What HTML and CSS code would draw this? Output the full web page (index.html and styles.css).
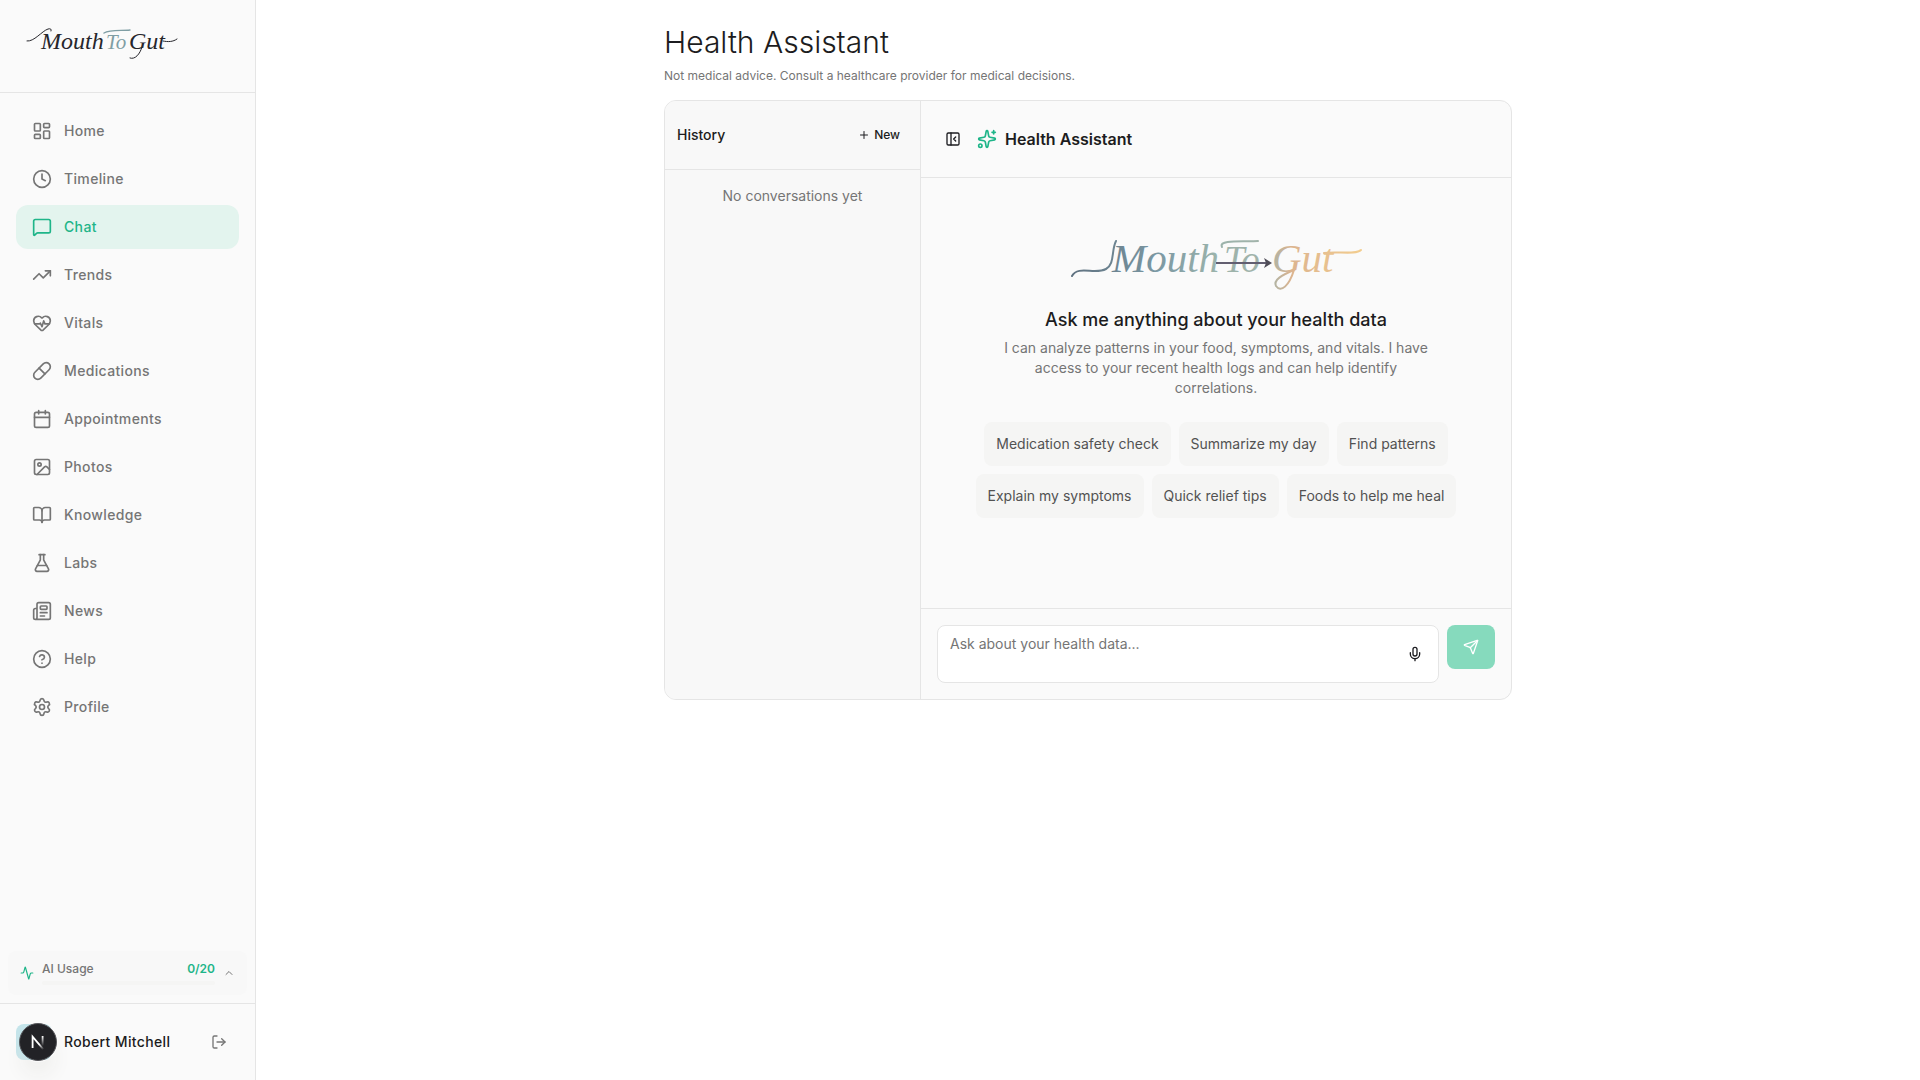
FILE: index.html
```html
<!DOCTYPE html>
<html lang="en">
<head>
<meta charset="utf-8">
<meta name="viewport" content="width=device-width, initial-scale=1">
<title>Health Assistant – Mouth To Gut</title>
<link rel="stylesheet" href="styles.css">
</head>
<body>
<div class="app">
  <aside class="sidebar">
    <header class="brand">
      <a href="#" aria-label="Mouth To Gut">
        <svg class="brand-logo" viewBox="0 0 160 44">
          <g fill="none" stroke="#26262c" stroke-linecap="round">
            <path stroke-width="1" d="M3 19C10 20 18 9 24 7Q28 6 27 9"/>
            <path stroke-width="1" d="M139 19C144 20 149 20 153 17"/>
            <path stroke-width="1" d="M118 25C116 32 111 38 106 36"/>
          </g>
          <path fill="none" stroke="#7f9ea4" stroke-width="1.4" stroke-linecap="round" d="M80 11C86 7 98 9 106 8"/>
          <text class="script" x="17" y="27" font-size="24" fill="#26262c">Mouth</text>
          <text class="script" x="82" y="27" font-size="21" fill="#7f9ea4">To</text>
          <text class="script" x="105" y="27" font-size="24" fill="#26262c">Gut</text>
        </svg>
      </a>
    </header>

    <nav class="nav" aria-label="Main">
      <a class="nav-item" href="#"><svg class="icon" viewBox="0 0 24 24"><rect width="7" height="9" x="3" y="3" rx="1"/><rect width="7" height="5" x="14" y="3" rx="1"/><rect width="7" height="9" x="14" y="12" rx="1"/><rect width="7" height="5" x="3" y="16" rx="1"/></svg>Home</a>
      <a class="nav-item" href="#"><svg class="icon" viewBox="0 0 24 24"><circle cx="12" cy="12" r="10"/><path d="M12 6v6l4 2"/></svg>Timeline</a>
      <a class="nav-item active" href="#" aria-current="page"><svg class="icon" viewBox="0 0 24 24"><path d="M22 17a2 2 0 0 1-2 2H6.828a2 2 0 0 0-1.414.586l-2.202 2.202A.71.71 0 0 1 2 21.286V5a2 2 0 0 1 2-2h16a2 2 0 0 1 2 2z"/></svg>Chat</a>
      <a class="nav-item" href="#"><svg class="icon" viewBox="0 0 24 24"><path d="M16 7h6v6"/><path d="m22 7-8.5 8.5-5-5L2 17"/></svg>Trends</a>
      <a class="nav-item" href="#"><svg class="icon" viewBox="0 0 24 24"><path d="M2 9.5a5.5 5.5 0 0 1 9.591-3.676.56.56 0 0 0 .818 0A5.49 5.49 0 0 1 22 9.5c0 2.29-1.5 4-3 5.5l-5.492 5.313a2 2 0 0 1-3 .019L5 15c-1.5-1.5-3-3.2-3-5.5"/><path d="M3.22 13H9.5l.5-1 2 4.5 2-7 1.5 3.5h5.27"/></svg>Vitals</a>
      <a class="nav-item" href="#"><svg class="icon" viewBox="0 0 24 24"><path d="m10.5 20.5 10-10a4.95 4.95 0 1 0-7-7l-10 10a4.95 4.95 0 1 0 7 7Z"/><path d="m8.5 8.5 7 7"/></svg>Medications</a>
      <a class="nav-item" href="#"><svg class="icon" viewBox="0 0 24 24"><path d="M8 2v4"/><path d="M16 2v4"/><rect width="18" height="18" x="3" y="4" rx="2"/><path d="M3 10h18"/></svg>Appointments</a>
      <a class="nav-item" href="#"><svg class="icon" viewBox="0 0 24 24"><rect width="18" height="18" x="3" y="3" rx="2"/><circle cx="9" cy="9" r="2"/><path d="m21 15-3.086-3.086a2 2 0 0 0-2.828 0L6 21"/></svg>Photos</a>
      <a class="nav-item" href="#"><svg class="icon" viewBox="0 0 24 24"><path d="M12 7v14"/><path d="M3 18a1 1 0 0 1-1-1V4a1 1 0 0 1 1-1h5a4 4 0 0 1 4 4 4 4 0 0 1 4-4h5a1 1 0 0 1 1 1v13a1 1 0 0 1-1 1h-6a3 3 0 0 0-3 3 3 3 0 0 0-3-3z"/></svg>Knowledge</a>
      <a class="nav-item" href="#"><svg class="icon" viewBox="0 0 24 24"><path d="M14 2v6a2 2 0 0 0 .245.96l5.51 10.08A2 2 0 0 1 18 22H6a2 2 0 0 1-1.755-2.96l5.51-10.08A2 2 0 0 0 10 8V2"/><path d="M6.453 15h11.094"/><path d="M8.5 2h7"/></svg>Labs</a>
      <a class="nav-item" href="#"><svg class="icon" viewBox="0 0 24 24"><path d="M15 18h-5"/><path d="M18 14h-8"/><path d="M4 22h16a2 2 0 0 0 2-2V4a2 2 0 0 0-2-2H8a2 2 0 0 0-2 2v16a2 2 0 0 1-4 0v-9a2 2 0 0 1 2-2h2"/><rect width="8" height="4" x="10" y="6" rx="1"/></svg>News</a>
      <a class="nav-item" href="#"><svg class="icon" viewBox="0 0 24 24"><circle cx="12" cy="12" r="10"/><path d="M9.09 9a3 3 0 0 1 5.83 1c0 2-3 3-3 3"/><path d="M12 17h.01"/></svg>Help</a>
      <a class="nav-item" href="#"><svg class="icon" viewBox="0 0 24 24"><path d="M9.671 4.136a2.34 2.34 0 0 1 4.659 0 2.34 2.34 0 0 0 3.319 1.915 2.34 2.34 0 0 1 2.33 4.033 2.34 2.34 0 0 0 0 3.831 2.34 2.34 0 0 1-2.33 4.033 2.34 2.34 0 0 0-3.319 1.915 2.34 2.34 0 0 1-4.659 0 2.34 2.34 0 0 0-3.32-1.915 2.34 2.34 0 0 1-2.33-4.033 2.34 2.34 0 0 0 0-3.831A2.34 2.34 0 0 1 6.35 6.051a2.34 2.34 0 0 0 3.319-1.915"/><circle cx="12" cy="12" r="3"/></svg>Profile</a>
    </nav>

    <button class="usage" type="button" aria-expanded="false">
      <svg class="icon usage-icon" viewBox="0 0 24 24"><path d="M22 12h-2.48a2 2 0 0 0-1.93 1.46l-2.35 8.36a.25.25 0 0 1-.48 0L9.24 2.18a.25.25 0 0 0-.48 0l-2.35 8.36A2 2 0 0 1 4.49 12H2"/></svg>
      <span class="usage-body">
        <span class="usage-row"><span>AI Usage</span><strong class="usage-count">0/20</strong></span>
        <span class="usage-track"></span>
      </span>
      <svg class="icon usage-chevron" viewBox="0 0 24 24"><path d="m18 15-6-6-6 6"/></svg>
    </button>

    <footer class="user">
      <span class="avatar">
        <button class="dev-badge" type="button" aria-label="Open dev tools">
          <svg viewBox="0 0 40 40">
            <defs>
              <linearGradient id="nDiag" x1="16" y1="14" x2="26" y2="27" gradientUnits="userSpaceOnUse"><stop offset=".6" stop-color="#fff"/><stop offset="1" stop-color="#fff" stop-opacity="0"/></linearGradient>
              <linearGradient id="nStem" x1="0" y1="14" x2="0" y2="24" gradientUnits="userSpaceOnUse"><stop offset="0" stop-color="#fff"/><stop offset="1" stop-color="#fff" stop-opacity="0"/></linearGradient>
            </defs>
            <circle cx="20" cy="20" r="18.5" fill="#222226" stroke="#57575b"/>
            <path fill="none" stroke="url(#nDiag)" stroke-width="1.8" d="M14.6 26V14.6L25.4 27.4"/>
            <path fill="none" stroke="url(#nStem)" stroke-width="1.8" d="M24.6 14v10"/>
          </svg>
        </button>
      </span>
      <span class="user-name">Robert Mitchell</span>
      <button class="logout" type="button" aria-label="Sign out"><svg class="icon small" viewBox="0 0 24 24"><path d="m16 17 5-5-5-5"/><path d="M21 12H9"/><path d="M9 21H5a2 2 0 0 1-2-2V5a2 2 0 0 1 2-2h4"/></svg></button>
    </footer>
  </aside>

  <main class="main">
    <div class="page">
      <h1 class="page-title">Health Assistant</h1>
      <p class="page-note">Not medical advice. Consult a healthcare provider for medical decisions.</p>

      <div class="card">
        <section class="history">
          <header class="history-head">
            <h2 class="history-title">History</h2>
            <button class="new-btn" type="button"><svg class="icon tiny" viewBox="0 0 24 24"><path d="M5 12h14"/><path d="M12 5v14"/></svg>New</button>
          </header>
          <p class="history-empty">No conversations yet</p>
        </section>

        <section class="chat">
          <header class="chat-head">
            <button class="panel-btn" type="button" aria-label="Collapse history"><svg class="icon small" viewBox="0 0 24 24"><rect width="18" height="18" x="3" y="3" rx="2"/><path d="M9 3v18"/><path d="m16 15-3-3 3-3"/></svg></button>
            <svg class="icon accent" viewBox="0 0 24 24"><path d="M11.017 2.814a1 1 0 0 1 1.966 0l1.051 5.558a2 2 0 0 0 1.594 1.594l5.558 1.051a1 1 0 0 1 0 1.966l-5.558 1.051a2 2 0 0 0-1.594 1.594l-1.051 5.558a1 1 0 0 1-1.966 0l-1.051-5.558a2 2 0 0 0-1.594-1.594l-5.558-1.051a1 1 0 0 1 0-1.966l5.558-1.051a2 2 0 0 0 1.594-1.594z"/><path d="M20 2v4"/><path d="M22 4h-4"/><circle cx="4" cy="20" r="2"/></svg>
            <h2 class="chat-title">Health Assistant</h2>
          </header>

          <div class="intro">
            <svg class="intro-logo" viewBox="0 0 320 64" role="img" aria-label="Mouth To Gut">
              <defs>
                <linearGradient id="ink" x1="15" y1="0" x2="305" y2="0" gradientUnits="userSpaceOnUse">
                  <stop offset="0" stop-color="#5f7180"/><stop offset=".3" stop-color="#7b98a3"/><stop offset=".5" stop-color="#9bb3ab"/><stop offset=".68" stop-color="#a3b3aa"/><stop offset=".76" stop-color="#dcb48f"/><stop offset="1" stop-color="#f3cd8f"/>
                </linearGradient>
              </defs>
              <g fill="none" stroke="url(#ink)" stroke-width="2" stroke-linecap="round">
                <path d="M16 50C22 39 39 49 50 43C59 38 55 25 60 15"/>
                <path d="M166 21C162 13 188 16 202 15"/>
                <path d="M268 27C280 25 300 29 305 24"/>
                <path d="M238 44C233 60 225 67 220 60C217 54 226 49 238 44"/>
              </g>
              <text class="script" x="56" y="46" font-size="41" fill="url(#ink)">Mouth</text>
              <text class="script" x="168" y="46" font-size="37" fill="url(#ink)">To</text>
              <text class="script" x="216" y="46" font-size="41" fill="url(#ink)">Gut</text>
              <path fill="none" stroke="#625e70" stroke-width="2" d="M160 37H213"/>
              <path fill="#4f4c57" d="m208 32 8 5-8 5 2-5z"/>
            </svg>
            <h3 class="intro-title">Ask me anything about your health data</h3>
            <p class="intro-text">I can analyze patterns in your food, symptoms, and vitals. I have access to your recent health logs and can help identify correlations.</p>
            <div class="chips">
              <button class="chip" type="button">Medication safety check</button>
              <button class="chip" type="button">Summarize my day</button>
              <button class="chip" type="button">Find patterns</button>
              <button class="chip" type="button">Explain my symptoms</button>
              <button class="chip" type="button">Quick relief tips</button>
              <button class="chip" type="button">Foods to help me heal</button>
            </div>
          </div>

          <form class="composer">
            <div class="field">
              <textarea class="field-input" aria-label="Message" placeholder="Ask about your health data..."></textarea>
              <button class="mic" type="button" aria-label="Dictate"><svg class="icon small" viewBox="0 0 24 24"><path d="M12 19v3"/><path d="M19 10v2a7 7 0 0 1-14 0v-2"/><rect x="9" y="2" width="6" height="13" rx="3"/></svg></button>
            </div>
            <button class="send" type="submit" aria-label="Send" disabled><svg class="icon small" viewBox="0 0 24 24"><path d="M14.536 21.686a.5.5 0 0 0 .937-.024l6.5-19a.496.496 0 0 0-.635-.635l-19 6.5a.5.5 0 0 0-.024.937l7.93 3.18a2 2 0 0 1 1.112 1.11z"/><path d="m21.854 2.147-10.94 10.939"/></svg></button>
          </form>
        </section>
      </div>
    </div>
  </main>
</div>
</body>
</html>
```
FILE: styles.css
```css
:root {
  --ink: #1c1c20;
  --muted: #757575;
  --soft: #525252;
  --line: #e5e5e5;
  --surface: #fafafa;
  --accent: #1fb589;
}

* { box-sizing: border-box; }

body {
  margin: 0;
  background: #fff;
  color: var(--ink);
  font: 14px/20px Inter, "Liberation Sans", sans-serif;
}

h1, h2, h3, p { margin: 0; }

button {
  margin: 0;
  padding: 0;
  border: 0;
  background: none;
  color: inherit;
  font: inherit;
}

.icon {
  flex: none;
  width: 20px;
  height: 20px;
  fill: none;
  stroke: currentColor;
  stroke-width: 2;
  stroke-linecap: round;
  stroke-linejoin: round;
}
.icon.small { width: 16px; height: 16px; }
.icon.tiny { width: 12px; height: 12px; }
.icon.accent { color: var(--accent); }

.script {
  font-family: "Liberation Serif", serif;
  font-style: italic;
}

.app {
  display: flex;
  min-height: 100vh;
}

/* Sidebar */
.sidebar {
  flex: none;
  display: flex;
  flex-direction: column;
  width: 256px;
  border-right: 1px solid var(--line);
  background: var(--surface);
}

.brand {
  padding: 20px 24px 24px;
  border-bottom: 1px solid var(--line);
}
.brand a { display: block; }
.brand-logo {
  display: block;
  width: 160px;
  height: 48px;
}

.nav {
  flex: 1;
  display: flex;
  flex-direction: column;
  gap: 4px;
  padding: 16px;
}
.nav-item {
  display: flex;
  align-items: center;
  gap: 12px;
  height: 44px;
  padding: 0 16px;
  border-radius: 12px;
  color: var(--muted);
  font-weight: 500;
  letter-spacing: 0.025em;
  text-decoration: none;
}
.nav-item.active {
  background: #e3f4ee;
  color: var(--accent);
}

.usage {
  display: flex;
  align-items: center;
  gap: 8px;
  height: 44px;
  margin: 0 8px 8px;
  padding: 0 12px;
  border-radius: 8px;
  background: #f8f8f8;
  color: var(--muted);
  font-size: 12px;
  line-height: 16px;
  text-align: left;
}
.usage-icon { width: 14px; height: 14px; color: var(--accent); }
.usage-chevron { width: 12px; height: 12px; }
.usage-body { flex: 1; display: grid; gap: 4px; }
.usage-row {
  display: flex;
  justify-content: space-between;
  font-weight: 500;
}
.usage-count { color: var(--accent); font-weight: 600; }
.usage-track {
  height: 4px;
  border-radius: 2px;
  background: #f5f5f4;
}

.user {
  display: flex;
  align-items: center;
  gap: 12px;
  padding: 20px 16px;
  border-top: 1px solid var(--line);
}
.avatar {
  position: relative;
  width: 36px;
  height: 36px;
  border-radius: 8px;
  background: #c4e4ea;
}
.dev-badge {
  position: absolute;
  top: -2px;
  left: 2px;
  width: 40px;
  height: 40px;
  border-radius: 50%;
  box-shadow: 0 16px 24px -8px #e4e4e0;
}
.dev-badge svg { display: block; }
.user-name {
  flex: 1;
  font-weight: 500;
  letter-spacing: 0.025em;
}
.logout {
  display: grid;
  place-items: center;
  width: 40px;
  height: 36px;
  color: var(--muted);
}

/* Page */
.main { flex: 1; min-width: 0; }
.page {
  max-width: 896px;
  margin: 0 auto;
  padding: 24px;
}
.page-title {
  font-size: 30px;
  font-weight: 300;
  line-height: 36px;
}
.page-note {
  margin: 8px 0 16px;
  color: var(--muted);
  font-size: 12px;
  line-height: 16px;
}

.card {
  display: flex;
  min-height: 600px;
  overflow: hidden;
  border: 1px solid var(--line);
  border-radius: 12px;
  background: var(--surface);
}

.history {
  flex: none;
  width: 256px;
  border-right: 1px solid var(--line);
  background: #f8f8f8;
}
.history-head {
  display: flex;
  align-items: center;
  justify-content: space-between;
  padding: 12px;
  border-bottom: 1px solid var(--line);
}
.history-title {
  font-size: 14px;
  font-weight: 500;
}
.new-btn {
  display: flex;
  align-items: center;
  gap: 4px;
  height: 44px;
  padding: 0 8px;
  font-size: 12px;
  font-weight: 500;
}
.history-empty {
  padding: 16px;
  color: var(--muted);
  text-align: center;
}

.chat {
  flex: 1;
  display: flex;
  flex-direction: column;
  min-width: 0;
}
.chat-head {
  display: flex;
  align-items: center;
  gap: 8px;
  padding: 16px;
  border-bottom: 1px solid var(--line);
}
.panel-btn {
  display: grid;
  place-items: center;
  width: 32px;
  height: 44px;
}
.chat-title {
  font-size: 16px;
  font-weight: 600;
  line-height: 24px;
}

.intro {
  flex: 1;
  display: flex;
  flex-direction: column;
  align-items: center;
  padding: 48px 16px 32px;
  text-align: center;
}
.intro-logo { width: 320px; height: 64px; }
.intro-title {
  margin-top: 16px;
  font-size: 18px;
  font-weight: 500;
  line-height: 28px;
}
.intro-text {
  max-width: 448px;
  margin: 4px 0 24px;
  color: var(--muted);
}
.chips {
  display: flex;
  flex-wrap: wrap;
  justify-content: center;
  gap: 8px;
  max-width: 512px;
}
.chip {
  height: 44px;
  padding: 0 12px;
  border-radius: 8px;
  background: #f5f5f4;
  color: var(--soft);
}

.composer {
  display: flex;
  align-items: flex-start;
  gap: 8px;
  padding: 16px;
  border-top: 1px solid var(--line);
}
.field { position: relative; flex: 1; }
.field-input {
  display: block;
  width: 100%;
  height: 58px;
  padding: 8px 48px 8px 12px;
  border: 1px solid var(--line);
  border-radius: 8px;
  background: #fff;
  color: var(--ink);
  font: inherit;
  resize: none;
}
.field-input::placeholder { color: #757575; }
.mic {
  position: absolute;
  top: 0;
  right: 8px;
  bottom: 0;
  display: grid;
  place-items: center;
  width: 32px;
}
.send {
  display: grid;
  place-items: center;
  width: 48px;
  height: 44px;
  border-radius: 8px;
  background: #86dabd;
  color: #fff;
}
```
